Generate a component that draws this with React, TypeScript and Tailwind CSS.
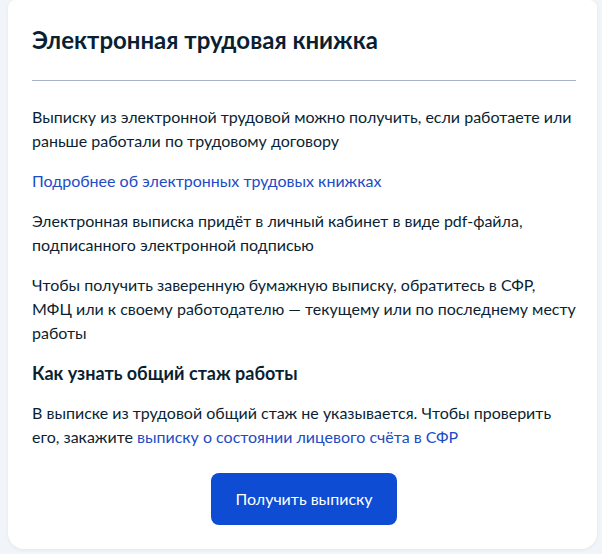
export default function App() {
  return (
    <div className="min-h-[554px] w-[602px] bg-[#f1f4f9] pl-2 pr-[5px] pb-[5px] font-['Lato','Noto_Sans',sans-serif] text-[#0b1f33]">
      <div className="rounded-b-2xl rounded-t-lg bg-white pt-6 pl-6 pr-[18px] pb-6 shadow-[0_1px_4px_rgba(11,31,51,0.06)]">
        <h1 className="text-2xl leading-8 font-bold">Электронная трудовая книжка</h1>
        <hr className="mt-6 mr-[3px] border-0 border-t border-[#a7b2cc]" />

        <div className="mt-[24px] space-y-4 text-base leading-6">
          <p>
            Выписку из электронной трудовой можно получить, если работаете или раньше работали по
            трудовому договору
          </p>
          <p>
            <a href="#" className="text-[#1d4bc7]">
              Подробнее об электронных трудовых книжках
            </a>
          </p>
          <p>
            Электронная выписка придёт в личный кабинет в виде pdf-файла, подписанного электронной
            подписью
          </p>
          <p>
            Чтобы получить заверенную бумажную выписку, обратитесь в СФР, МФЦ или к своему
            работодателю — текущему или по последнему месту работы
          </p>
          <h2 className="text-lg leading-6 font-bold">Как узнать общий стаж работы</h2>
          <p>
            В выписке из трудовой общий стаж не указывается. Чтобы проверить его, закажите{" "}
            <a href="#" className="text-[#1d4bc7]">
              выписку о состоянии лицевого счёта в СФР
            </a>
          </p>
        </div>

        <div className="mt-6 mr-[3px] flex justify-center">
          <button className="h-[52px] w-[186px] rounded-lg bg-[#0d4cd3] text-base text-white">
            Получить выписку
          </button>
        </div>
      </div>
    </div>
  );
}
